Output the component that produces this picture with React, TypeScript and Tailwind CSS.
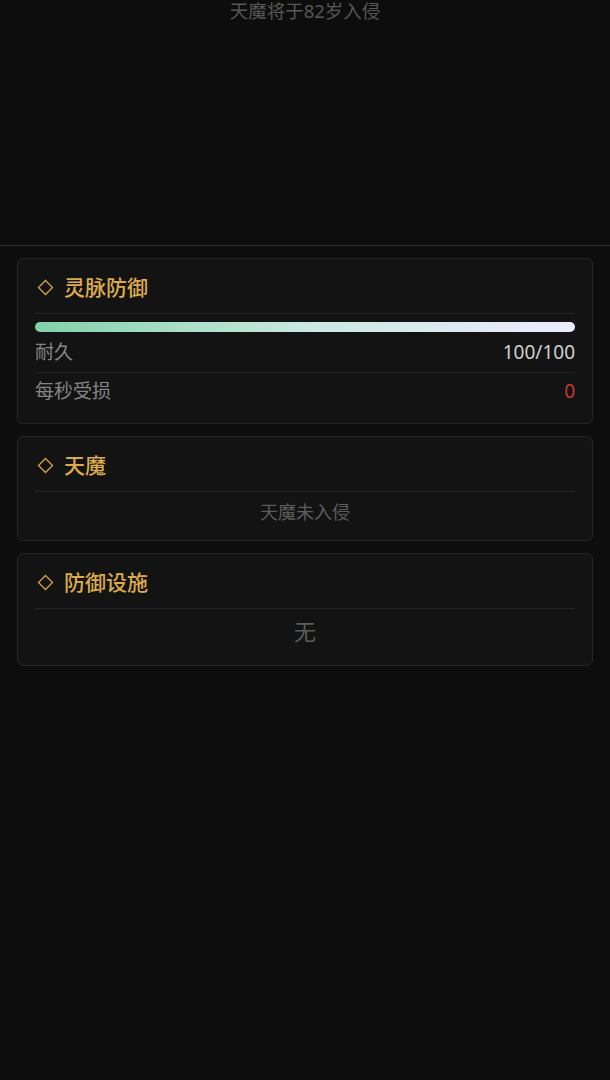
export default function App() {
  const Diamond = () => (
    <svg width="17" height="17" viewBox="0 0 17 17" className="shrink-0">
      <path d="M8.5 1.5 L15.5 8.5 L8.5 15.5 L1.5 8.5 Z" fill="none" stroke="#d4a545" strokeWidth="1.3" />
    </svg>
  );

  const Header = ({ title }: { title: string }) => (
    <div className="flex items-center gap-[10px] pt-[15px] pb-[12px] pl-[2px] border-b border-[#262626]">
      <Diamond />
      <span className="text-[21px] leading-[27px] font-medium text-[#dcab4c]">{title}</span>
    </div>
  );

  return (
    <div
      className="min-h-screen w-full bg-[#0d0d0d] text-[#8a8a8a]"
      style={{ fontFamily: '"Noto Sans", "Noto Sans CJK SC", sans-serif' }}
    >
      <div className="h-[246px] border-b border-[#2a2a2a] flex justify-center">
        <span className="text-[18.5px] leading-[22px] text-[#575757]">天魔将于82岁入侵</span>
      </div>

      <div className="px-[17px] pt-[12px] flex flex-col gap-[12px]">
        {/* 灵脉防御 */}
        <div className="rounded-[6px] border border-[#262626] bg-[#131313] px-[17px]">
          <Header title="灵脉防御" />
          <div className="mt-[8px] h-[10px] rounded-full bg-gradient-to-r from-[#80d2a9] via-[#c9e8e0] to-[#ececff]" />
          <div className="flex items-center justify-between h-[41px] border-b border-[#222222]">
            <span className="text-[19px] text-[#858585]">耐久</span>
            <span className="text-[19px] text-[#d0d0d0]">100/100</span>
          </div>
          <div className="flex items-center justify-between h-[36px] mb-[14px]">
            <span className="text-[19px] text-[#858585]">每秒受损</span>
            <span className="text-[19px] text-[#c8392e]">0</span>
          </div>
        </div>

        {/* 天魔 */}
        <div className="rounded-[6px] border border-[#262626] bg-[#131313] px-[17px]">
          <Header title="天魔" />
          <div className="pt-[8px] pb-[16px] text-center text-[18px] leading-[24px] text-[#5c5c5c]">
            天魔未入侵
          </div>
        </div>

        {/* 防御设施 */}
        <div className="rounded-[6px] border border-[#262626] bg-[#131313] px-[17px]">
          <Header title="防御设施" />
          <div className="pt-[8px] pb-[20px] text-center text-[22px] leading-[28px] text-[#5c5c5c]">
            无
          </div>
        </div>
      </div>
    </div>
  );
}
